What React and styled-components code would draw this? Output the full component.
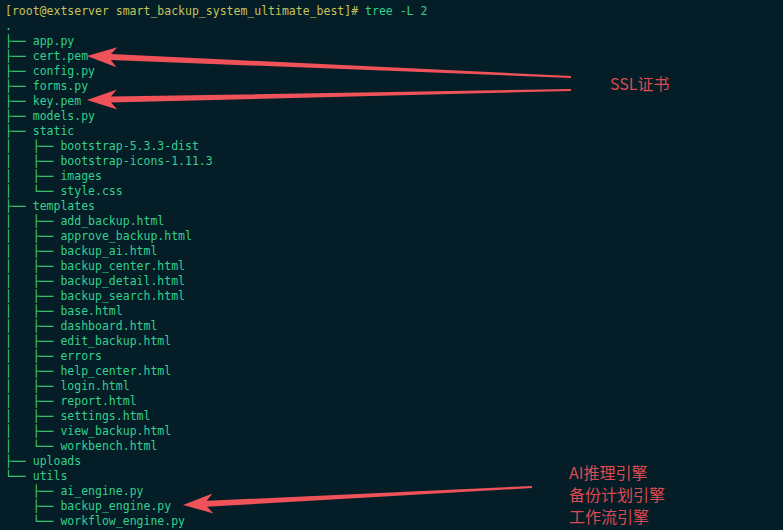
import React from "react";
import styled, { createGlobalStyle } from "styled-components";

const Global = createGlobalStyle`
  html, body { margin: 0; padding: 0; background: #041d26; }
  #root { width: 783px; height: 530px; overflow: hidden; }
`;

const Screen = styled.div`
  position: relative;
  width: 783px;
  height: 530px;
  background: #041d26;
  overflow: hidden;
`;

const Terminal = styled.div`
  padding: 4px 0 0 5px;
  font-family: "DejaVu Sans Mono", "Liberation Mono", monospace;
  font-size: 11.5px;
  line-height: 15px;
  white-space: pre;
`;

const Line = styled.div`
  height: 15px;
`;

const Prompt = styled.span`
  color: #c4c35c;
`;

const Command = styled.span`
  color: #35cf8c;
`;

const Branch = styled.span`
  color: #44dc7e;
`;

const Name = styled.span`
  color: #33d08e;
`;

const Notes = styled.div`
  position: absolute;
  left: ${(p) => p.$x}px;
  top: ${(p) => p.$y}px;
  display: flex;
  flex-direction: column;
  font-family: "Noto Sans CJK SC", "Noto Sans", sans-serif;
  font-size: 16px;
  line-height: 22px;
  color: #dc4a52;
`;

const Overlay = styled.svg`
  position: absolute;
  left: 0;
  top: 0;
  pointer-events: none;
`;

const tree = [
  [".", ""],
  ["├── ", "app.py"],
  ["├── ", "cert.pem"],
  ["├── ", "config.py"],
  ["├── ", "forms.py"],
  ["├── ", "key.pem"],
  ["├── ", "models.py"],
  ["├── ", "static"],
  ["│   ├── ", "bootstrap-5.3.3-dist"],
  ["│   ├── ", "bootstrap-icons-1.11.3"],
  ["│   ├── ", "images"],
  ["│   └── ", "style.css"],
  ["├── ", "templates"],
  ["│   ├── ", "add_backup.html"],
  ["│   ├── ", "approve_backup.html"],
  ["│   ├── ", "backup_ai.html"],
  ["│   ├── ", "backup_center.html"],
  ["│   ├── ", "backup_detail.html"],
  ["│   ├── ", "backup_search.html"],
  ["│   ├── ", "base.html"],
  ["│   ├── ", "dashboard.html"],
  ["│   ├── ", "edit_backup.html"],
  ["│   ├── ", "errors"],
  ["│   ├── ", "help_center.html"],
  ["│   ├── ", "login.html"],
  ["│   ├── ", "report.html"],
  ["│   ├── ", "settings.html"],
  ["│   ├── ", "view_backup.html"],
  ["│   └── ", "workbench.html"],
  ["├── ", "uploads"],
  ["└── ", "utils"],
  ["    ├── ", "ai_engine.py"],
  ["    ├── ", "backup_engine.py"],
  ["    └── ", "workflow_engine.py"],
];

function arrowPoints(tip, tail, headLen = 28, headHalf = 10, shaftNear = 3, shaftFar = 1) {
  const dx = tail[0] - tip[0];
  const dy = tail[1] - tip[1];
  const len = Math.hypot(dx, dy);
  const ux = dx / len, uy = dy / len;
  const nx = -uy, ny = ux;
  const at = (d, o) => [tip[0] + ux * d + nx * o, tip[1] + uy * d + ny * o];
  const pts = [
    tip,
    at(headLen + 2, headHalf),
    at(headLen - 4, shaftNear),
    [tail[0] + nx * shaftFar, tail[1] + ny * shaftFar],
    [tail[0] - nx * shaftFar, tail[1] - ny * shaftFar],
    at(headLen - 4, -shaftNear),
    at(headLen + 2, -headHalf),
  ];
  return pts.map((p) => p.map((v) => v.toFixed(1)).join(",")).join(" ");
}

const arrows = [
  { tip: [87, 56], tail: [571, 77] },
  { tip: [87, 100], tail: [571, 90] },
  { tip: [183, 505], tail: [532, 487] },
];

export default function App() {
  return (
    <Screen>
      <Global />
      <Terminal>
        <Line>
          <Prompt>[root@extserver smart_backup_system_ultimate_best]# </Prompt>
          <Command>tree -L 2</Command>
        </Line>
        {tree.map(([b, n], i) => (
          <Line key={i}>
            <Branch>{b}</Branch>
            <Name>{n}</Name>
          </Line>
        ))}
      </Terminal>
      <Overlay width="783" height="530" viewBox="0 0 783 530">
        {arrows.map((a, i) => (
          <polygon key={i} points={arrowPoints(a.tip, a.tail)} fill="#ef5258" />
        ))}
      </Overlay>
      <Notes $x={610} $y={72}>
        <span>SSL证书</span>
      </Notes>
      <Notes $x={569} $y={461}>
        <span>AI推理引擎</span>
        <span>备份计划引擎</span>
        <span>工作流引擎</span>
      </Notes>
    </Screen>
  );
}
